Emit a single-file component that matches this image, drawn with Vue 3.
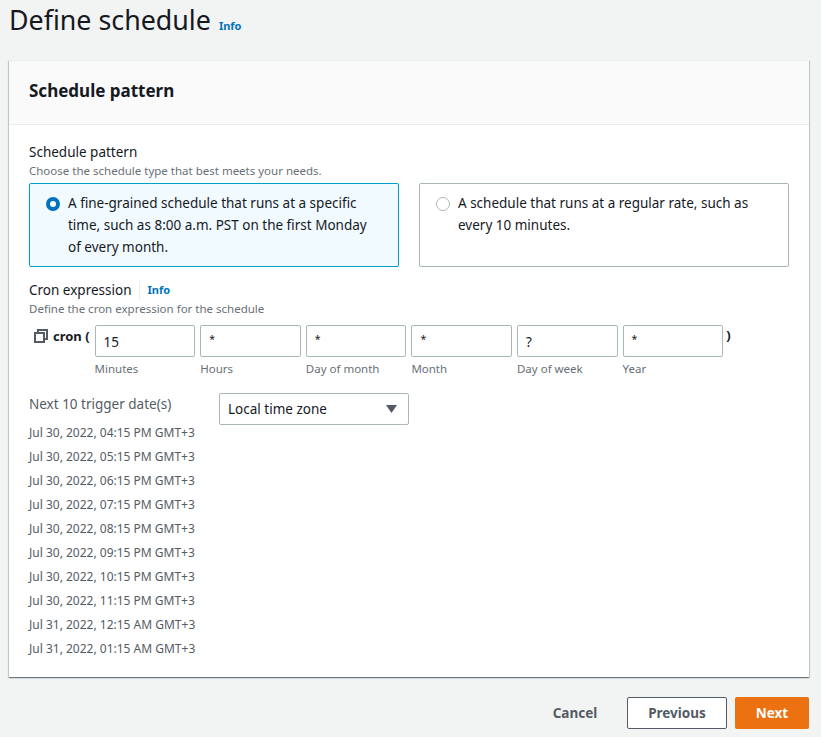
<script setup>
const fields = [
  { label: 'Minutes', value: '15', big: true },
  { label: 'Hours', value: '*' },
  { label: 'Day of month', value: '*' },
  { label: 'Month', value: '*' },
  { label: 'Day of week', value: '?', big: true },
  { label: 'Year', value: '*' }
]
const dates = [
  'Jul 30, 2022, 04:15 PM GMT+3',
  'Jul 30, 2022, 05:15 PM GMT+3',
  'Jul 30, 2022, 06:15 PM GMT+3',
  'Jul 30, 2022, 07:15 PM GMT+3',
  'Jul 30, 2022, 08:15 PM GMT+3',
  'Jul 30, 2022, 09:15 PM GMT+3',
  'Jul 30, 2022, 10:15 PM GMT+3',
  'Jul 30, 2022, 11:15 PM GMT+3',
  'Jul 31, 2022, 12:15 AM GMT+3',
  'Jul 31, 2022, 01:15 AM GMT+3'
]
</script>

<template>
  <div class="page">
    <div class="title-row">
      <h1>Define schedule</h1>
      <a class="info">Info</a>
    </div>
    <section class="card">
      <header class="card-head"><h2>Schedule pattern</h2></header>
      <div class="card-body">
        <div class="label">Schedule pattern</div>
        <div class="hint first-hint">Choose the schedule type that best meets your needs.</div>
        <div class="tiles">
          <div class="tile on">
            <span class="radio"></span>
            <span>A fine-grained schedule that runs at a specific time, such as 8:00 a.m. PST on the first Monday of every month.</span>
          </div>
          <div class="tile">
            <span class="radio"></span>
            <span>A schedule that runs at a regular rate, such as every 10 minutes.</span>
          </div>
        </div>

        <div class="label cron-label">Cron expression<a class="info">Info</a></div>
        <div class="hint first-hint">Define the cron expression for the schedule</div>
        <div class="cron">
          <div class="cron-open">
            <svg width="14" height="14" viewBox="0 0 14 14" fill="none" stroke="#545b64" stroke-width="2">
              <rect x="1" y="4" width="9" height="9" />
              <path d="M4 4V1h9v9h-3" />
            </svg>
            <b>cron (</b>
          </div>
          <div v-for="f in fields" :key="f.label" class="field">
            <div class="input" :class="{ big: f.big }">{{ f.value }}</div>
            <div class="field-label">{{ f.label }}</div>
          </div>
          <b class="cron-close">)</b>
        </div>

        <div class="next">
          <div class="dates">
            <div class="dates-title">Next 10 trigger date(s)</div>
            <div v-for="d in dates" :key="d" class="date">{{ d }}</div>
          </div>
          <div class="select">
            <span>Local time zone</span>
            <svg width="11" height="8" viewBox="0 0 11 8"><path d="M0 0h11L5.5 8z" fill="#545b64" /></svg>
          </div>
        </div>
      </div>
    </section>
    <footer class="actions">
      <button class="btn link">Cancel</button>
      <button class="btn normal">Previous</button>
      <button class="btn primary">Next</button>
    </footer>
  </div>
</template>

<style>
html, body { margin: 0; background: #f2f3f3; }
</style>

<style scoped>
.page {
  width: 821px;
  height: 737px;
  overflow: hidden;
  box-sizing: border-box;
  padding: 0 12px 0 9px;
  background: #f2f3f3;
  color: #16191f;
  font-family: "Noto Sans", "Open Sans", sans-serif;
  font-size: 13.5px;
}
.title-row { display: flex; align-items: baseline; height: 60px; box-sizing: border-box; }
h1 { margin: 0; font-size: 26.8px; line-height: 40px; font-weight: 400; }
.title-row .info { margin-left: 8px; }
.info { color: #0073bb; font-size: 11px; font-weight: 700; }
.card {
  background: #fff;
  width: 800px;
  height: 617px;
  box-sizing: border-box;
  box-shadow: 0 1px 1px 0 rgba(0, 28, 36, .4), 1px 1px 1px 0 rgba(0, 28, 36, .15), -1px 1px 1px 0 rgba(0, 28, 36, .15);
  border-top: 1px solid #eaeded;
}
.card-head {
  height: 64px;
  box-sizing: border-box;
  background: #fafafa;
  border-bottom: 1px solid #eaeded;
  padding: 0 20px 4px;
  display: flex;
  align-items: center;
}
h2 { margin: 0; font-size: 17px; font-weight: 700; }
.card-body { padding: 18px 20px 0; }
.label { font-size: 13.5px; line-height: 18px; }
.hint { font-size: 11.5px; line-height: 16px; color: #687078; }
.first-hint { margin-top: 2px; }
.tiles { display: flex; gap: 20px; margin-top: 4px; }
.tile {
  width: 370px;
  height: 84px;
  box-sizing: border-box;
  border: 1px solid #aab7b8;
  border-radius: 2px;
  padding: 8px 20px 0 16px;
  display: flex;
  gap: 8px;
  line-height: 22px;
}
.tile.on { border-color: #00a1c9; background: #f1faff; }
.radio {
  flex: none;
  width: 14px;
  height: 14px;
  box-sizing: border-box;
  margin-top: 5px;
  border-radius: 50%;
  border: 1px solid #aab7b8;
  background: #fff;
}
.tile.on .radio { border: 4px solid #0073bb; }
.cron-label { margin-top: 14px; display: flex; align-items: center; }
.cron-label .info { margin-left: 7px; padding-left: 8px; border-left: 1px solid #eaeded; line-height: 18px; }
.cron { display: flex; margin-top: 8px; gap: 5px; align-items: flex-start; }
.cron-open { width: 60.6px; box-sizing: border-box; padding: 2px 0 0 5px; display: flex; gap: 5px; align-items: center; }
b { font-weight: 700; font-size: 13px; }
.field { width: 100.6px; }
.input {
  height: 32px;
  box-sizing: border-box;
  border: 1px solid #aab7b8;
  border-radius: 2px;
  padding: 0 9px 0 8px;
  line-height: 27px;
  font-size: 10.5px;
  background: #fff;
}
.input.big { font-size: 13.5px; line-height: 32px; }
.field-label { font-size: 11.5px; line-height: 16px; margin-top: 4px; color: #687078; }
.cron-close { margin-left: -2px; line-height: 20px; }
.next { display: flex; margin-top: 16px; }
.dates { width: 190px; }
.dates-title { color: #545b64; font-size: 13.5px; line-height: 22px; margin-bottom: 6px; }
.date { font-size: 12px; line-height: 24px; color: #545b64; white-space: nowrap; }
.select {
  width: 190px;
  height: 32px;
  box-sizing: border-box;
  border: 1px solid #aab7b8;
  border-radius: 2px;
  padding: 0 11px 0 8px;
  display: flex;
  align-items: center;
  justify-content: space-between;
}
.actions { display: flex; justify-content: flex-end; align-items: center; margin-top: 20px; width: 800px; gap: 8px; }
.btn {
  font-family: inherit;
  font-size: 13.5px;
  font-weight: 700;
  height: 32px;
  box-sizing: border-box;
  border-radius: 2px;
  padding: 0;
}
.link { border: 0; background: none; color: #545b64; width: 88px; }
.normal { border: 1px solid #545b64; background: #fff; color: #545b64; width: 100px; }
.primary { border: 0; background: #ec7211; color: #fff; width: 74px; }
</style>
